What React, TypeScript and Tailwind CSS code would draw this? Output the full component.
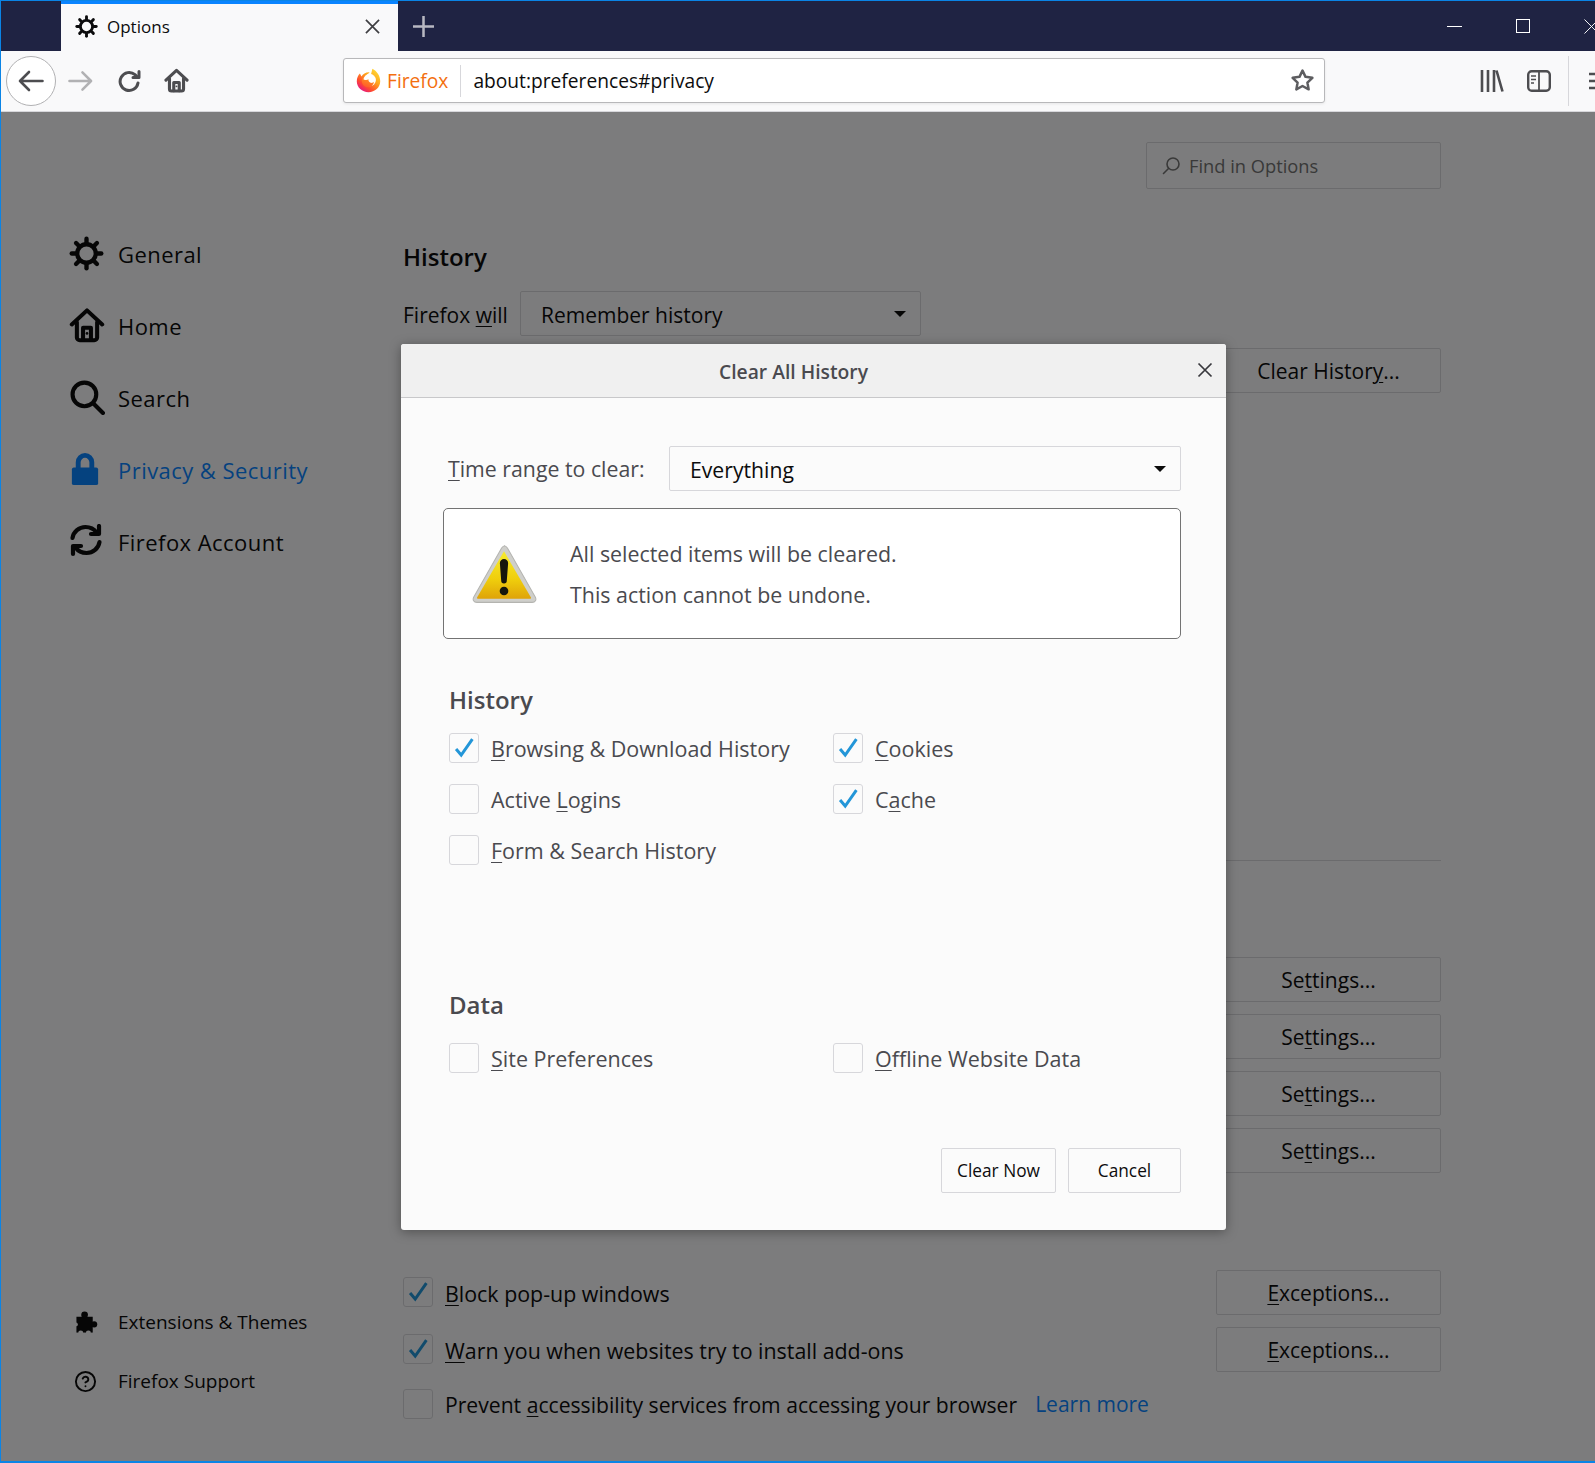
import { CircleHelp } from 'lucide-react'
import type { ReactNode } from 'react'

function Gear({ className }: { className?: string }) {
  const spokes = [0, 45, 90, 135, 180, 225, 270, 315]
  return (
    <svg viewBox="0 0 32 32" className={className}>
      <circle cx="16" cy="16" r="8.5" fill="none" stroke="currentColor" strokeWidth="4" />
      {spokes.map((a) => (
        <line key={a} x1="16" y1="6" x2="16" y2="2.5" stroke="currentColor" strokeWidth="4" strokeLinecap="round" transform={`rotate(${a} 16 16)`} />
      ))}
    </svg>
  )
}

function HomeIcon({ className, sw = 2.4 }: { className?: string; sw?: number }) {
  return (
    <svg viewBox="0 0 32 32" fill="none" stroke="currentColor" strokeWidth={sw} strokeLinecap="round" strokeLinejoin="round" className={className}>
      <path d="M2.500 15.500 16 3l13.500 12.500" />
      <path d="M7 13.500V27a2.500 2.500 0 0 0 2.500 2.500h13A2.500 2.500 0 0 0 25 27V13.500" />
      <path d="M12.500 29V18.500h7V29" />
      <circle cx="16" cy="23.500" r="1.200" fill="currentColor" stroke="none" />
    </svg>
  )
}

function FirefoxLogo() {
  return (
    <svg viewBox="0 0 32 32" className="h-[25px] w-[25px]">
      <defs>
        <linearGradient id="ffOuter" x1="0.9" y1="0.05" x2="0.2" y2="0.95">
          <stop offset="0" stopColor="#ffdd35" />
          <stop offset="0.4" stopColor="#ffa51f" />
          <stop offset="0.75" stopColor="#ff4a2e" />
          <stop offset="1" stopColor="#e31587" />
        </linearGradient>
        <linearGradient id="ffFox" x1="0.7" y1="0" x2="0.3" y2="1">
          <stop offset="0" stopColor="#ff9a20" />
          <stop offset="1" stopColor="#ff5a2a" />
        </linearGradient>
      </defs>
      <path d="M21 1c5.500 3 10 8.500 10 16 0 8-6.800 14-15 14S1 25 1 17c0-4 1.500-7.500 4-10l2 4c2-3.500 6-6 10.500-5.500L14 9h5z" fill="url(#ffOuter)" />
      <circle cx="17.500" cy="15.500" r="8" fill="#fff" />
      <path d="M8 12c.5 1.500 1 2.500 2.500 3 2 .5 4 .5 5.500-.5-.5 3 2 5 4.500 4.500 1-.2 2-.8 2.500-1.500-.5 4-3.500 7-7.500 7-4.500 0-8-3.500-8-8 0-1.600.2-3.200.500-4.500z" fill="url(#ffFox)" />
    </svg>
  )
}

function WarningIcon() {
  return (
    <svg viewBox="0 0 64 58" className="h-[60px] w-[66px]">
      <defs>
        <linearGradient id="warnFill" x1="0" y1="0" x2="0" y2="1">
          <stop offset="0" stopColor="#f7ec2e" />
          <stop offset="0.6" stopColor="#efcd0c" />
          <stop offset="1" stopColor="#dfa309" />
        </linearGradient>
      </defs>
      <path d="M32 1.500c1.500 0 2.500 1 3.300 2.300l27 47.500c1.500 2.800 0 5.200-3 5.200H5.700c-3 0-4.500-2.400-3-5.200l27-47.500c.8-1.300 1.800-2.300 3.300-2.300z" fill="#cfcfcb" stroke="#b4b4b0" strokeWidth="1" />
      <path d="M32 7 58 51.500a1 1 0 0 1-.8 1.500H6.800a1 1 0 0 1-.8-1.500z" fill="url(#warnFill)" />
      <path d="M28 18.500a4 4 0 0 1 8 0l-1.300 17a2.700 2.700 0 0 1-5.400 0z" fill="#16160c" />
      <circle cx="32" cy="45.500" r="4.200" fill="#16160c" />
    </svg>
  )
}

function Puzzle() {
  return (
    <svg viewBox="0 0 24 24" className="h-[23px] w-[23px]">
      <rect x="1.500" y="6" width="17" height="16.500" fill="currentColor" />
      <circle cx="10" cy="4" r="3.500" fill="currentColor" />
      <circle cx="20" cy="14" r="3.200" fill="currentColor" />
      <circle cx="6" cy="23" r="2.600" fill="#f9f9fa" />
      <circle cx="14" cy="23" r="2.600" fill="#f9f9fa" />
      <circle cx="1" cy="14" r="2" fill="#f9f9fa" />
    </svg>
  )
}

function Check() {
  return (
    <svg viewBox="0 0 30 30" fill="none" stroke="currentColor" strokeWidth="3.200" className="h-full w-full">
      <path d="M6.500 16 12 22.500 24 5.500" />
    </svg>
  )
}

function Checkbox({ checked, bg = 'bg-[#fbfbfb]' }: { checked?: boolean; bg?: string }) {
  return (
    <span className={`h-[30px] w-[30px] shrink-0 rounded-[3px] border border-[#d7d7db] text-[#2396d8] ${bg}`}>
      {checked && <Check />}
    </span>
  )
}

function Caret() {
  return <span className="ml-auto h-0 w-0 border-x-[6.500px] border-t-[6.500px] border-x-transparent border-t-[#0c0c0d]" />
}

function OptionButton({ children, className = '' }: { children: ReactNode; className?: string }) {
  return (
    <div className={`flex h-[45px] items-center justify-center rounded-[2px] border border-[#d7d7db] pt-[2px] text-[21px] text-[#0c0c0d] ${className}`}>
      {children}
    </div>
  )
}

const uline = 'underline decoration-1 underline-offset-[3px]'

const navItems = [
  { label: 'General', icon: <Gear className="h-[35px] w-[35px]" /> },
  { label: 'Home', icon: <HomeIcon className="h-[36px] w-[36px]" sw={3.600} /> },
  {
    label: 'Search',
    icon: (
      <svg viewBox="0 0 34 34" fill="none" stroke="currentColor" strokeWidth="4" strokeLinecap="round" className="ml-[1px] h-[35px] w-[35px]">
        <circle cx="14" cy="14" r="11.500" />
        <path d="M23 23 32 32" />
      </svg>
    ),
  },
  {
    label: 'Privacy & Security',
    active: true,
    icon: (
      <svg viewBox="0 0 32 36" fill="currentColor" className="h-[35px] w-[32px]">
        <path d="M6.500 16V9.500a9.500 9.500 0 0 1 19 0V16h-5V9.500a4.500 4.500 0 0 0-9 0V16z" />
        <rect x="2.500" y="15" width="27" height="18" rx="2" />
      </svg>
    ),
  },
  {
    label: 'Firefox Account',
    icon: (
      <svg viewBox="0 1 34 34" fill="none" stroke="currentColor" strokeWidth="4.200" strokeLinecap="round" strokeLinejoin="round" className="h-[34px] w-[34px]">
        <path d="M3.500 15C4.500 8.500 10 4 16.500 4c4.500 0 8.500 2 11 5.500" />
        <path d="M30 3v8h-8" />
        <path d="M30.500 19c-1 6.500-6.500 11-13 11-4.500 0-8.500-2-11-5.500" />
        <path d="M4 31v-8h8" />
      </svg>
    ),
  },
]

function Sidebar() {
  return (
    <aside className="flex w-[402px] shrink-0 flex-col pt-[125px]">
      <div className="flex flex-col gap-[37px] pl-[68px]">
        {navItems.map((item) => (
          <div key={item.label} className={`flex h-[35px] items-center text-[22px] tracking-[0.45px] ${item.active ? 'text-[#0a84ff]' : 'text-[#0c0c0d]'}`}>
            <span className={`flex w-[49px] shrink-0 items-center ${item.active ? '' : 'mb-[3px]'}`}>{item.icon}</span>
            {item.label}
          </div>
        ))}
      </div>
      <div className="mt-[749px] flex flex-col gap-[33px] pl-[74px] text-[19px] text-[#0c0c0d]">
        <div className="flex h-[26px] items-center">
          <span className="w-[43px]"><Puzzle /></span>
          Extensions &amp; Themes
        </div>
        <div className="flex h-[26px] items-center">
          <span className="-ml-[1px] w-[44px]"><CircleHelp size={23} strokeWidth={2} /></span>
          Firefox Support
        </div>
      </div>
    </aside>
  )
}

function MainPane() {
  return (
    <main className="flex w-[1038px] shrink-0 flex-col text-[21px] text-[#0c0c0d]">
      <div className="mt-[30px] flex h-[47px] w-[295px] items-center self-end rounded-[2px] border border-[#d7d7db] pl-[14px] text-[18.300px] text-[#737373]">
        <svg viewBox="0 0 20 20" fill="none" stroke="currentColor" strokeWidth="1.600" strokeLinecap="round" className="mr-[8px] h-[20px] w-[20px]">
          <circle cx="12" cy="8" r="6" />
          <path d="M7.500 12.500 2.500 17.500" />
        </svg>
        Find in Options
      </div>
      <h2 className="mt-[50px] h-[36px] text-[24px] leading-[36px] font-semibold text-[#0c0c0d]">History</h2>
      <div className="mt-[16px] flex items-center">
        <span className="w-[117px] pt-[4px]">Firefox <span className={uline}>w</span>ill</span>
        <div className="flex h-[45px] w-[401px] items-center rounded-[2px] border border-[#d7d7db] pr-[14px] pl-[20px]">
          <span className="pt-[4px]">Remember history</span>
          <Caret />
        </div>
      </div>
      <div className="mt-[12px] flex flex-col items-end">
        <OptionButton className="w-[225px]">Clear Histor<span className={uline}>y</span>...</OptionButton>
        <div className="mt-[467px] h-px w-[800px] bg-[#d7d7db]" />
        <div className="mt-[96px] flex flex-col gap-[12px]">
          {[0, 1, 2, 3].map((i) => (
            <OptionButton key={i} className="w-[225px]">Se<span className={uline}>t</span>tings...</OptionButton>
          ))}
        </div>
      </div>
      <div className="mt-[97px] flex items-center justify-between">
        <div className="flex items-center gap-[12px] text-[21.400px]">
          <Checkbox checked bg="bg-[#f9f9fa]" />
          <span className="pt-[3px]"><span className={uline}>B</span>lock pop-up windows</span>
        </div>
        <OptionButton className="w-[225px]"><span className={uline}>E</span>xceptions...</OptionButton>
      </div>
      <div className="mt-[12px] flex items-center justify-between">
        <div className="flex items-center gap-[12px] text-[21.400px]">
          <Checkbox checked bg="bg-[#f9f9fa]" />
          <span className="pt-[3px]"><span className={uline}>W</span>arn you when websites try to install add-ons</span>
        </div>
        <OptionButton className="w-[225px]"><span className={uline}>E</span>xceptions...</OptionButton>
      </div>
      <div className="mt-[16px] flex items-center gap-[12px] text-[21.150px]">
        <Checkbox bg="bg-[#f9f9fa]" />
        <span className="pt-[1px]">Prevent <span className={uline}>a</span>ccessibility services from accessing your browser</span>
        <span className="ml-[6px] pt-[1px] text-[21px] text-[#0a84ff]">Learn more</span>
      </div>
    </main>
  )
}

function ClearRow({ label, checked }: { label: ReactNode; checked?: boolean }) {
  return (
    <div className="flex h-[30px] items-center gap-[12px] text-[21.500px] text-[#4a4a4f]">
      <Checkbox checked={checked} />
      <span className="pt-[2px]">{label}</span>
    </div>
  )
}

function ClearDialog() {
  return (
    <div className="absolute top-[343px] left-[400px] flex h-[886px] w-[825px] flex-col rounded-[3px] bg-[#fbfbfb] shadow-[0_2px_12px_rgba(0,0,0,0.35)]">
      <header className="relative flex h-[54px] shrink-0 items-center justify-center rounded-t-[3px] border-b border-[#c8c8ca] bg-[#f0f0f0] pt-[3px] pr-[40px] text-[19.300px] font-semibold text-[#4a4a4f]">
        Clear All History
        <svg viewBox="0 0 16 16" fill="none" stroke="#38383d" strokeWidth="1.700" className="absolute top-[18px] right-[13px] h-[16px] w-[16px]">
          <path d="M1.500 1.500l13 13M14.500 1.500l-13 13" />
        </svg>
      </header>
      <div className="flex flex-1 flex-col pt-[48px] pr-[45px] pl-[42px]">
        <div className="flex items-center">
          <span className="w-[226px] pl-[5px] text-[21.300px] text-[#4a4a4f]"><span className={uline}>T</span>ime range to clear:</span>
          <div className="flex h-[45px] flex-1 items-center rounded-[2px] border border-[#d7d7db] pr-[14px] pl-[20px] text-[21.200px] text-[#0c0c0d]">
            <span className="pt-[2px]">Everything</span>
            <Caret />
          </div>
        </div>
        <div className="mt-[17px] flex h-[131px] items-center rounded-[5px] border border-[#737373] bg-white pl-[27px]">
          <WarningIcon />
          <div className="ml-[33px] flex flex-col gap-[11px] pt-[2px] text-[21.400px] leading-[30px] text-[#4a4a4f]">
            <p>All selected items will be cleared.</p>
            <p>This action cannot be undone.</p>
          </div>
        </div>
        <section className="mt-[43px] pl-[6px]">
          <h3 className="h-[36px] text-[24px] leading-[36px] font-semibold text-[#4a4a4f]">History</h3>
          <div className="mt-[15px] grid grid-cols-[384px_1fr] gap-y-[21px]">
            <ClearRow checked label={<><span className={uline}>B</span>rowsing &amp; Download History</>} />
            <ClearRow checked label={<><span className={uline}>C</span>ookies</>} />
            <ClearRow label={<>Active <span className={uline}>L</span>ogins</>} />
            <ClearRow checked label={<>C<span className={uline}>a</span>che</>} />
            <ClearRow label={<><span className={uline}>F</span>orm &amp; Search History</>} />
          </div>
        </section>
        <section className="mt-[122px] pl-[6px]">
          <h3 className="h-[36px] text-[24px] leading-[36px] font-semibold text-[#4a4a4f]">Data</h3>
          <div className="mt-[20px] grid grid-cols-[384px_1fr]">
            <ClearRow label={<><span className={uline}>S</span>ite Preferences</>} />
            <ClearRow label={<><span className={uline}>O</span>ffline Website Data</>} />
          </div>
        </section>
        <div className="mt-[75px] flex justify-end gap-[12px] text-[17.300px] text-[#0c0c0d]">
          <div className="flex h-[45px] w-[115px] items-center justify-center rounded-[2px] border border-[#d7d7db]">Clear Now</div>
          <div className="flex h-[45px] w-[113px] items-center justify-center rounded-[2px] border border-[#d7d7db]">Cancel</div>
        </div>
      </div>
    </div>
  )
}

export default function App() {
  return (
    <div className="relative flex h-[1463px] w-[1595px] flex-col overflow-hidden border-t border-b-2 border-l border-[#0a84e6] bg-[#f9f9fa] font-['Open_Sans',sans-serif]">
      {/* tab strip */}
      <div className="flex h-[50px] shrink-0 bg-[#1f2343]">
        <div className="w-[60px] shrink-0" />
        <div className="flex w-[337px] shrink-0 items-center border-t-[3px] border-[#0a84ff] bg-[#f9f9fa] pr-[18px] pb-[2px] pl-[14px] text-[17px] text-[#0c0c0d]">
          <Gear className="mr-[9px] h-[23px] w-[23px]" />
          Options
          <svg viewBox="0 0 16 16" fill="none" stroke="#3f3f42" strokeWidth="1.800" className="ml-auto h-[15px] w-[15px]">
            <path d="M1 1l14 14M15 1 1 15" />
          </svg>
        </div>
        <div className="flex w-[50px] shrink-0 items-center justify-center">
          <svg viewBox="0 0 20 20" stroke="#b8b8c2" strokeWidth="2.400" className="h-[21px] w-[21px]">
            <path d="M10 0v20M0 10h20" />
          </svg>
        </div>
        <div className="ml-[999px] flex shrink-0 items-center text-white">
          <span className="h-px w-[15px] bg-white" />
          <span className="ml-[54px] h-[14px] w-[14px] border border-white" />
          <svg viewBox="0 0 16 16" fill="none" stroke="currentColor" strokeWidth="1" className="ml-[54px] h-[15px] w-[15px] shrink-0">
            <path d="M.500.500l15 15M15.500.500l-15 15" />
          </svg>
        </div>
      </div>

      {/* nav bar */}
      <div className="flex h-[61px] shrink-0 items-center border-b border-[#d7d7db] bg-[#f9f9fa] pb-[1px] text-[#4d4d50]">
        <div className="ml-[5px] flex h-[50px] w-[50px] shrink-0 items-center justify-center rounded-full border border-[#b1b1b3] bg-white">
          <svg viewBox="0 0 26 22" fill="none" stroke="currentColor" strokeWidth="2.600" strokeLinecap="round" strokeLinejoin="round" className="h-[22px] w-[26px]">
            <path d="M24.500 11H2M11 2 2 11l9 9" />
          </svg>
        </div>
        <svg viewBox="0 0 26 22" fill="none" stroke="#b1b1b3" strokeWidth="2.600" strokeLinecap="round" strokeLinejoin="round" className="ml-[12px] h-[22px] w-[25px] shrink-0">
          <path d="M1.500 11H24M15 2l9 9-9 9" />
        </svg>
        <svg viewBox="0 0 24 24" fill="none" stroke="currentColor" strokeWidth="3" strokeLinecap="round" strokeLinejoin="round" className="ml-[24px] h-[24px] w-[24px] shrink-0">
          <path d="M21 14a9 9 0 1 1-3-8.300l3 2.800" />
          <path d="M22 2.500v6h-6" />
        </svg>
        <HomeIcon className="ml-[23px] h-[25px] w-[25px] shrink-0" sw={4} />
        <div className="ml-[154px] flex h-[45px] w-[982px] shrink-0 items-center rounded-[3px] border border-[#b8b8ba] bg-white pr-[9px] pl-[12px] shadow-[0_1px_3px_rgba(0,0,0,0.08)]">
          <FirefoxLogo />
          <span className="ml-[6px] pt-[1px] text-[19.200px] text-[#f36f10]">Firefox</span>
          <span className="ml-[12px] h-[32px] w-px bg-[#d7d7db]" />
          <span className="ml-[12px] pt-[1px] text-[19.200px] text-[#0c0c0d]">about:preferences#privacy</span>
          <svg viewBox="0 0 24 24" fill="none" stroke="#5d5d60" strokeWidth="2.400" strokeLinejoin="round" className="ml-auto h-[25px] w-[25px]">
            <path d="m12 2.500 2.900 6 6.600.9-4.800 4.600 1.200 6.500-5.900-3.200-5.900 3.200L7.300 14 2.500 9.400l6.600-.9z" />
          </svg>
        </div>
        <svg viewBox="0 0 24 22" fill="none" stroke="currentColor" strokeWidth="2.600" className="ml-[155px] h-[22px] w-[24px] shrink-0">
          <path d="M2 0v22M8 0v22M14 0v22M16.500.500l6 21" />
        </svg>
        <svg viewBox="0 0 24 22" fill="none" stroke="currentColor" className="ml-[23px] h-[22px] w-[24px] shrink-0">
          <rect x="1.200" y="1.200" width="21.600" height="19.600" rx="3.500" strokeWidth="2.400" />
          <path d="M12 1v20" strokeWidth="1.800" />
          <path d="M4 6h5M4 9.500h5M4 13h3" strokeWidth="1.500" />
        </svg>
        <span className="ml-[17px] h-[50px] w-px shrink-0 bg-[#d7d7db]" />
        <svg viewBox="0 0 20 20" stroke="currentColor" strokeWidth="2.600" className="ml-[20px] h-[20px] w-[20px] shrink-0">
          <path d="M0 3h20M0 10h20M0 17h20" />
        </svg>
      </div>

      {/* preferences page */}
      <div className="flex flex-1">
        <Sidebar />
        <MainPane />
      </div>

      {/* modal dimming */}
      <div className="absolute inset-x-0 top-[111px] bottom-0 bg-black/50" />
      <ClearDialog />
    </div>
  )
}
